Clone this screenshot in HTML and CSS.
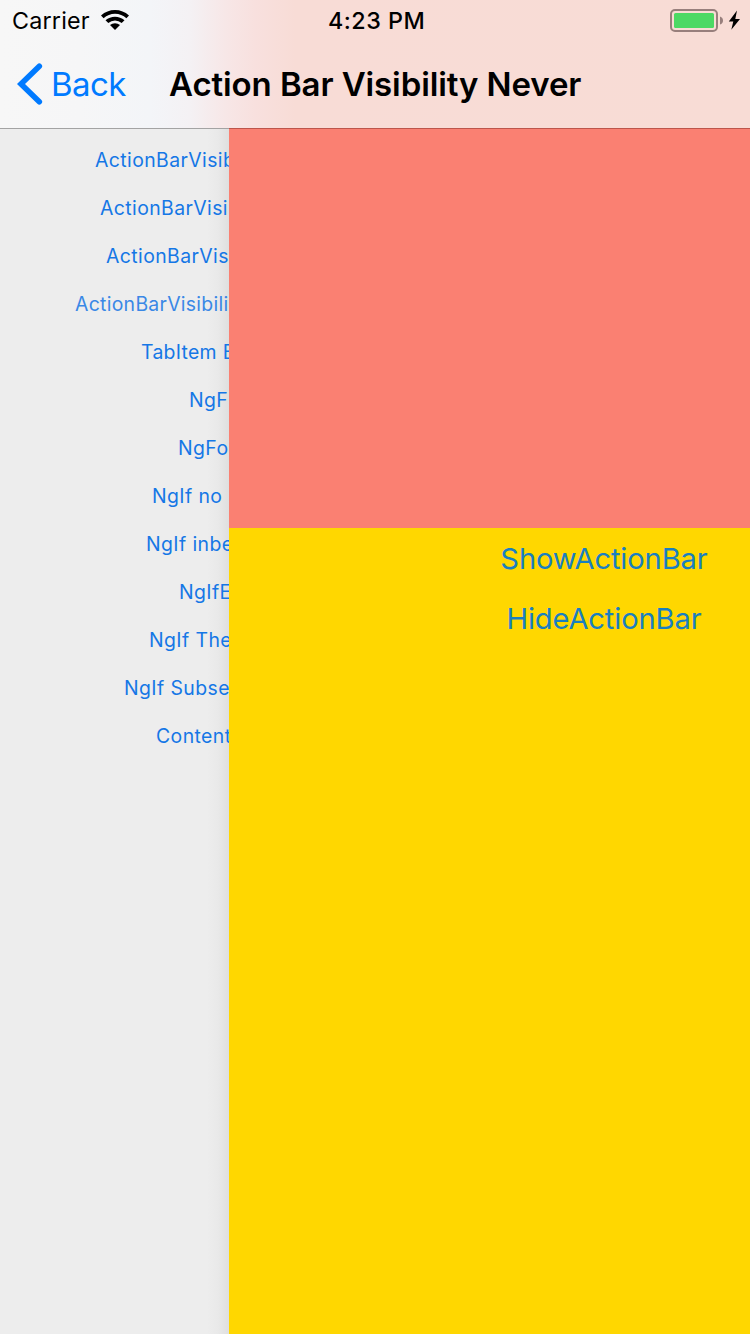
FILE: index.html
```html
<!DOCTYPE html>
<html lang="en">
<head>
<meta charset="utf-8">
<title>Action Bar Visibility Never</title>
<link rel="stylesheet" href="styles.css">
</head>
<body>
<div class="screen">
  <header class="header">
    <div class="status">
      <div class="status-left">
        <span class="carrier">Carrier</span>
        <svg class="wifi" width="28" height="20" viewBox="0 0 28 20">
          <path d="M0 5.500Q6 0 14 0t14 5.500L25.400 8.200Q20.500 3.700 14 3.700T2.600 8.200Z"/>
          <path d="M4.500 10.200Q8.600 6.700 14 6.700t9.500 3.500L20.700 13Q17.800 10.500 14 10.500T7.300 13Z"/>
          <path d="M9 15Q11.200 13.200 14 13.200t5 1.800L14 20Z"/>
        </svg>
      </div>
      <span class="time">4:23 PM</span>
      <svg class="battery" width="72" height="24" viewBox="0 0 72 24">
        <rect x="1" y="1" width="46" height="21" rx="4" fill="none" stroke="#987f7c" stroke-width="2"/>
        <rect x="4" y="4" width="40" height="15" rx="1.500" fill="#4cd964"/>
        <path d="M50 7.500Q53 8.500 53 11.500T50 15.500Z" fill="#987f7c"/>
        <path d="M67 1.500L58.800 12.400H63.300L61.300 20.800L70 9.900H65.300Z" fill="#000"/>
      </svg>
    </div>
    <nav class="nav">
      <a class="back">
        <svg width="26" height="42" viewBox="0 0 26 42"><path d="M22.300 3.200L4 21L22.300 38.800" fill="none" stroke="#007aff" stroke-width="5.600" stroke-linecap="round" stroke-linejoin="miter"/></svg>
        <span class="back-label">Back</span>
      </a>
      <h1 class="title">Action Bar Visibility Never</h1>
    </nav>
  </header>
  <main class="content">
    <ul class="menu">
      <li class="item i1">ActionBarVisib</li>
      <li class="item i2">ActionBarVisi</li>
      <li class="item i3">ActionBarVis</li>
      <li class="item i4">ActionBarVisibili</li>
      <li class="item i5">TabItem B</li>
      <li class="item i6">NgF</li>
      <li class="item i7">NgFo</li>
      <li class="item i8">NgIf no</li>
      <li class="item i9">NgIf inbe</li>
      <li class="item i10">NgIfE</li>
      <li class="item i11">NgIf The</li>
      <li class="item i12">NgIf Subse</li>
      <li class="item i13">Content</li>
    </ul>
    <section class="page">
      <div class="banner"></div>
      <div class="actions">
        <a class="action show">ShowActionBar</a>
        <a class="action hide">HideActionBar</a>
      </div>
    </section>
  </main>
</div>
</body>
</html>
```
FILE: styles.css
```css
* { box-sizing: border-box; }
body { margin: 0; font-family: Inter, "Liberation Sans", sans-serif; }
.screen {
  width: 750px;
  height: 1334px;
  display: flex;
  flex-direction: column;
  overflow: hidden;
}
.header {
  height: 129px;
  flex: none;
  border-bottom: 1px solid;
  border-image: linear-gradient(to right, #a3a3a3 0 229px, #bd554b 229px) 1;
  background: linear-gradient(to right, #f7f7f7 0, #f6f6f7 80px, #f3f5f8 150px, #f4f1f4 190px, #f7e7e7 225px, #f8e0de 255px, #f8dcd6 295px, #f8dcd5 100%);
}
.status {
  height: 40px;
  display: grid;
  grid-template-columns: 328px 1fr 80px;
  align-items: center;
}
.status-left { display: flex; align-items: center; padding-left: 12px; }
.carrier { font-size: 23.300px; letter-spacing: 0.200px; width: 89px; }
.time { font-size: 23.300px; font-weight: 550; letter-spacing: 0.500px; }
.battery { margin-top: 2px; }
.nav {
  height: 88px;
  display: grid;
  grid-template-columns: 169px 1fr;
  align-items: center;
}
.back { display: flex; align-items: center; padding-left: 17px; color: #007aff; }
.back svg { flex: none; }
.back-label { font-size: 33px; margin-left: 8px; letter-spacing: -0.600px; }
.title { margin: 0; font-size: 33px; font-weight: 600; letter-spacing: -0.100px; white-space: nowrap; }
.content { flex: 1; display: flex; min-height: 0; }
.menu {
  width: 229px;
  flex: none;
  margin: 0;
  padding: 7px 0 0;
  list-style: none;
  overflow: hidden;
  background: linear-gradient(to right, #ededed 0 207px, #e9e9e9 218px, #dfdfdf 229px);
}
.item {
  height: 48px;
  line-height: 48px;
  font-size: 19.400px;
  letter-spacing: 0.420px;
  white-space: nowrap;
  color: #1577e6;
}
.i1 { padding-left: 95px; }
.i2 { padding-left: 100px; }
.i3 { padding-left: 106px; }
.i4 { padding-left: 75px; letter-spacing: 0.300px; color: #3a88e6; }
.i5 { padding-left: 141px; letter-spacing: 0.300px; }
.i6 { padding-left: 189px; }
.i7 { padding-left: 178px; }
.i8 { padding-left: 152px; }
.i9 { padding-left: 146px; }
.i10 { padding-left: 179px; }
.i11 { padding-left: 149px; }
.i12 { padding-left: 124px; }
.i13 { padding-left: 156px; }
.page { flex: 1; min-width: 0; display: flex; flex-direction: column; overflow: hidden; }
.banner { height: 399px; flex: none; background: #fa8072; }
.actions { width: 750px; flex: 1; padding-top: 1px; background: #ffd700; }
.action {
  display: block;
  height: 60px;
  line-height: 60px;
  text-align: center;
  font-size: 29.100px;
  letter-spacing: -0.120px;
  color: #1a7fc0;
}
```
